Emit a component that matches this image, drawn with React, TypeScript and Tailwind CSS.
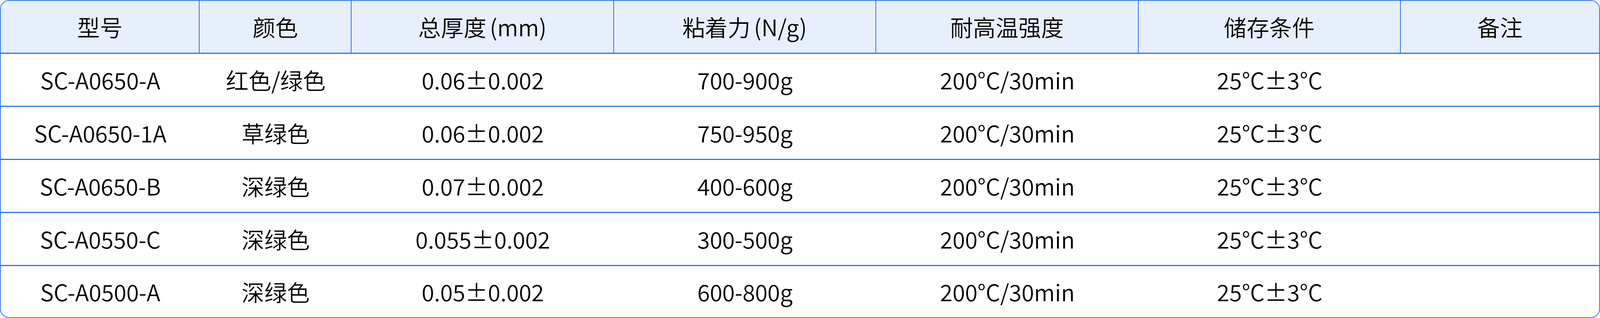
const headers: [string, string][] = [
  ["型号", ""],
  ["颜色", ""],
  ["总厚度", "(mm)"],
  ["粘着力", "(N/g)"],
  ["耐高温强度", ""],
  ["储存条件", ""],
  ["备注", ""],
];

const rows = [
  ["SC-A0650-A", "红色/绿色", "0.06±0.002", "700-900g", "200°C/30min", "25°C±3°C", ""],
  ["SC-A0650-1A", "草绿色", "0.06±0.002", "750-950g", "200°C/30min", "25°C±3°C", ""],
  ["SC-A0650-B", "深绿色", "0.07±0.002", "400-600g", "200°C/30min", "25°C±3°C", ""],
  ["SC-A0550-C", "深绿色", "0.055±0.002", "300-500g", "200°C/30min", "25°C±3°C", ""],
  ["SC-A0500-A", "深绿色", "0.05±0.002", "600-800g", "200°C/30min", "25°C±3°C", ""],
];

// column widths taken from the 4724px-wide screenshot, as fractions
const cols = "grid grid-cols-[588fr_449fr_775fr_775fr_776fr_774fr_587fr]";

export default function App() {
  return (
    <div className="w-full h-[815px] bg-white font-['Noto_Sans_CJK_SC',sans-serif] font-[350] text-[1.42vw] text-black">
      <div className="h-full border-2 border-[#2f74ec] rounded-[24px] overflow-hidden flex flex-col">
        {/* header */}
        <div className={`${cols} h-[136px] shrink-0 bg-[#e8effc] border-b-[3px] border-[#2f74ec]`}>
          {headers.map(([h, unit], i) => (
            <div
              key={h}
              className={`min-w-0 flex items-center justify-center whitespace-nowrap ${i < headers.length - 1 ? "border-r-2 border-[#2f74ec]" : ""}`}
            >
              {h}
              {unit && <span className="ml-[0.15em]">{unit}</span>}
            </div>
          ))}
        </div>

        {/* body */}
        {rows.map((r, ri) => (
          <div
            key={r[0]}
            className={`${cols} ${ri < rows.length - 1 ? "h-[136px] shrink-0 border-b-[3px] border-[#2f74ec]" : "flex-1"}`}
          >
            {r.map((c, ci) => (
              <div key={ci} className="min-w-0 flex items-center justify-center whitespace-nowrap">
                {c}
              </div>
            ))}
          </div>
        ))}
      </div>
    </div>
  );
}
